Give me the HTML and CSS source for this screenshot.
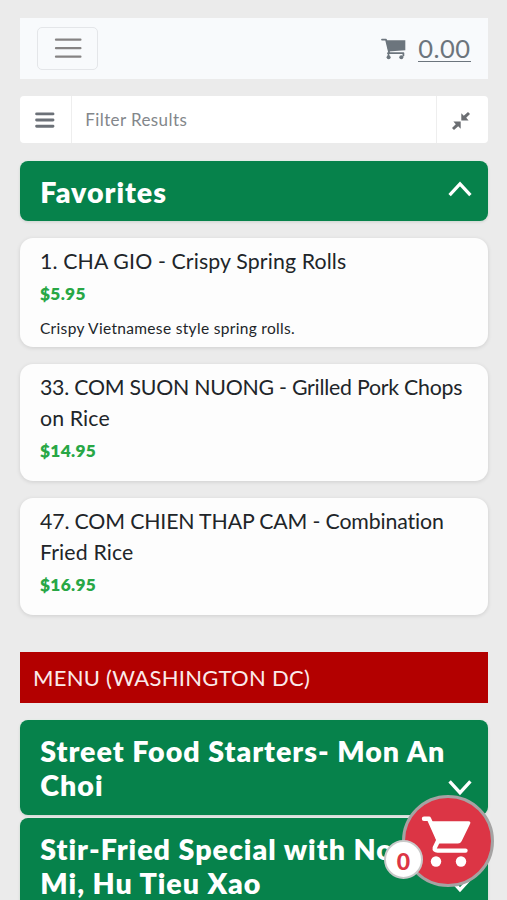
FILE: index.html
```html
<!DOCTYPE html>
<html lang="en">
<head>
<meta charset="utf-8">
<meta name="viewport" content="width=device-width, initial-scale=1">
<title>Menu</title>
<link rel="stylesheet" href="styles.css">
</head>
<body>
<main class="page">
  <nav class="navbar">
    <button class="toggler" aria-label="Toggle navigation">
      <svg width="30" height="30" viewBox="0 0 30 30"><path d="M3 6.7h24.4M3 15.2h24.4M3 23.7h24.4" stroke="#858383" stroke-width="2.3" stroke-linecap="round"/></svg>
    </button>
    <a class="total">
      <svg width="25" height="22" viewBox="0 0 25 22"><path d="M1 1.6h4l3.2 13.2M7 15.2h15.4v2.4" fill="none" stroke="#6c757d" stroke-width="1.8" stroke-linejoin="round" stroke-linecap="round"/><path d="M5 2.2h19.3v10L7.4 13.4z" fill="#6c757d"/><path d="M7.5 15v4" stroke="#6c757d" stroke-width="1.6"/><circle cx="7.6" cy="19.2" r="2" fill="#6c757d"/><circle cx="20.3" cy="19.2" r="2" fill="#6c757d"/></svg>
      <span class="amount">0.00</span>
    </a>
  </nav>

  <div class="filter">
    <button class="filter-btn filter-list" aria-label="List">
      <svg width="20" height="18" viewBox="0 0 20 18"><path d="M1.6 2.9h16.4M1.6 9h16.4M1.6 15.2h16.4" stroke="#6c7178" stroke-width="2.9" stroke-linecap="round"/></svg>
    </button>
    <div class="filter-text">Filter Results</div>
    <button class="filter-btn filter-collapse" aria-label="Collapse">
      <svg width="20" height="20" viewBox="0 0 20 20" fill="#6b6e72"><path d="M17 1l2 2-3.8 3.8 2.4 2.6H10.300V2.300l2.500 2.400z"/><path d="M3 19l-2-2 3.800-3.800-2.400-2.600H9.700V17.700l-2.500-2.400z"/></svg>
    </button>
  </div>

  <section class="category favorites">
    <h2>Favorites</h2>
    <svg class="chevron" width="26" height="18" viewBox="0 0 26 18"><path d="M2.6 15.2L13 3.9l10.4 11.3" fill="none" stroke="#fff" stroke-width="3.3"/></svg>
  </section>

  <article class="item">
    <h3>1. CHA GIO - Crispy Spring Rolls</h3>
    <p class="price">$5.95</p>
    <p class="desc">Crispy Vietnamese style spring rolls.</p>
  </article>
  <article class="item">
    <h3><span class="tight">33. COM SUON NUONG - Grilled Pork Chops</span><br>on Rice</h3>
    <p class="price">$14.95</p>
  </article>
  <article class="item">
    <h3><span class="snug">47. COM CHIEN THAP CAM - Combination</span><br>Fried Rice</h3>
    <p class="price">$16.95</p>
  </article>

  <div class="location">MENU (WASHINGTON DC)</div>

  <section class="category">
    <h2>Street Food Starters- Mon An<br>Choi</h2>
    <svg class="chevron" width="26" height="18" viewBox="0 0 26 18"><path d="M2.6 2.4L13 13.7L23.4 2.4" fill="none" stroke="#fff" stroke-width="3.3"/></svg>
  </section>
  <section class="category">
    <h2>Stir-Fried Special with No<br>Mi, Hu Tieu Xao</h2>
    <svg class="chevron" width="26" height="18" viewBox="0 0 26 18"><path d="M2.6 2.4L13 13.7L23.4 2.4" fill="none" stroke="#fff" stroke-width="3.3"/></svg>
  </section>
</main>

<div class="cart">
  <svg width="54" height="54" viewBox="0 0 54 54"><path d="M3 4.8h5L17.5 26L13.8 33.6Q13.2 36.6 16.5 36.6H44.5" fill="none" stroke="#fff" stroke-width="4.4" stroke-linejoin="round" stroke-linecap="round"/><path d="M9 7.3H47.5Q50.2 7.6 49 10L40.6 27.2Q39.4 29.6 37 29.6H16.5z" fill="#fff"/><circle cx="15" cy="47.5" r="5.2" fill="#fff"/><circle cx="40" cy="47.5" r="5.2" fill="#fff"/></svg>
  <span class="badge">0</span>
</div>
</body>
</html>
```
FILE: styles.css
```css
* { box-sizing: border-box; }
html, body { height: 900px; overflow: hidden; }
body {
  margin: 0;
  background: #ebebeb;
  color: #212529;
  font-family: Lato, "Open Sans", sans-serif;
}
h2, h3, p { margin: 0; }
button { padding: 0; border: 0; background: none; }
svg { display: block; }

.page {
  display: flex;
  flex-direction: column;
  padding: 18px 19.5px 0 20.3px;
}
.navbar {
  display: flex;
  align-items: center;
  justify-content: space-between;
  height: 60.5px;
  padding: 0 17px;
  background: #f8fafc;
}
.toggler {
  display: grid;
  place-items: center;
  width: 61px;
  height: 43.5px;
  border: 1.5px solid #e4e6e9;
  border-radius: 5px;
}
.total { display: flex; align-items: center; gap: 12px; color: #6c757d; }
.total svg { margin-top: 1px; }
.amount {
  border-bottom: 1.5px solid #6c757d;
  margin-top: 2px;
  font-size: 25.5px;
  line-height: 25px;
  letter-spacing: .45px;
}

.filter {
  display: flex;
  height: 47px;
  margin-top: 17.5px;
  overflow: hidden;
  border-radius: 4px;
  background: #fff;
}
.filter-btn { display: grid; place-items: center; width: 52px; }
.filter-list { border-right: 1px solid #eee; padding-right: 2px; }
.filter-collapse { border-left: 1px solid #eee; padding: 3px 3px 0 0; }
.filter-text {
  flex: 1;
  padding-left: 13px;
  font-size: 17px;
  line-height: 47px;
  letter-spacing: .4px;
  color: #83878b;
}

.category {
  display: flex;
  align-items: flex-end;
  justify-content: space-between;
  flex: none;
  height: 94.5px;
  margin-bottom: 2.8px;
  padding: 14px 15px 12.5px 20px;
  border-radius: 8px;
  background: #06824b;
  box-shadow: 0 1px 3px rgba(0, 0, 0, .12), 0 0 0 1px rgba(225, 250, 236, .35);
  color: #fff;
}
.category h2 {
  font-size: 28.6px;
  font-weight: 800;
  line-height: 34px;
  letter-spacing: .98px;
  white-space: nowrap;
}
.chevron { flex: none; margin-bottom: 5.5px; }
.favorites {
  align-items: center;
  height: 60.5px;
  margin: 17.5px 0 17.3px;
}

.item {
  height: 109px;
  margin-bottom: 17px;
  padding: 7.7px 19.7px 0;
  border-radius: 13px;
  background: #fdfdfd;
  box-shadow: 0 1px 4px rgba(0, 0, 0, .12);
}
.item + .item { height: 116.7px; }
.item h3 {
  font-size: 21.3px;
  font-weight: 400;
  line-height: 31px;
  letter-spacing: .13px;
  white-space: nowrap;
}
.item h3 .tight { letter-spacing: -.24px; }
.item h3 .snug { letter-spacing: -.15px; }
.price {
  padding-top: 1px;
  font-size: 17.3px;
  font-weight: 800;
  line-height: 32px;
  letter-spacing: .3px;
  color: #28a745;
}
.desc { font-size: 15.5px; line-height: 37px; letter-spacing: .32px; }

.location {
  height: 50.5px;
  margin: 20.8px 0 17.5px;
  padding-left: 12.7px;
  background: #b30000;
  color: #fbeaea;
  font-size: 22px;
  line-height: 51px;
  letter-spacing: .27px;
}

.cart {
  position: absolute;
  left: 402px;
  top: 795px;
  display: grid;
  place-items: center;
  width: 92px;
  height: 92px;
  border: 3px solid #a5a3a3;
  border-radius: 50%;
  background: #dc3545;
}
.badge {
  position: absolute;
  left: -21px;
  top: 42px;
  width: 39px;
  height: 39px;
  border: 2px solid #c9c9c9;
  border-radius: 50%;
  background: #fff;
  color: #dc3545;
  font-size: 23px;
  font-weight: 900;
  line-height: 39px;
  text-align: center;
}
```
